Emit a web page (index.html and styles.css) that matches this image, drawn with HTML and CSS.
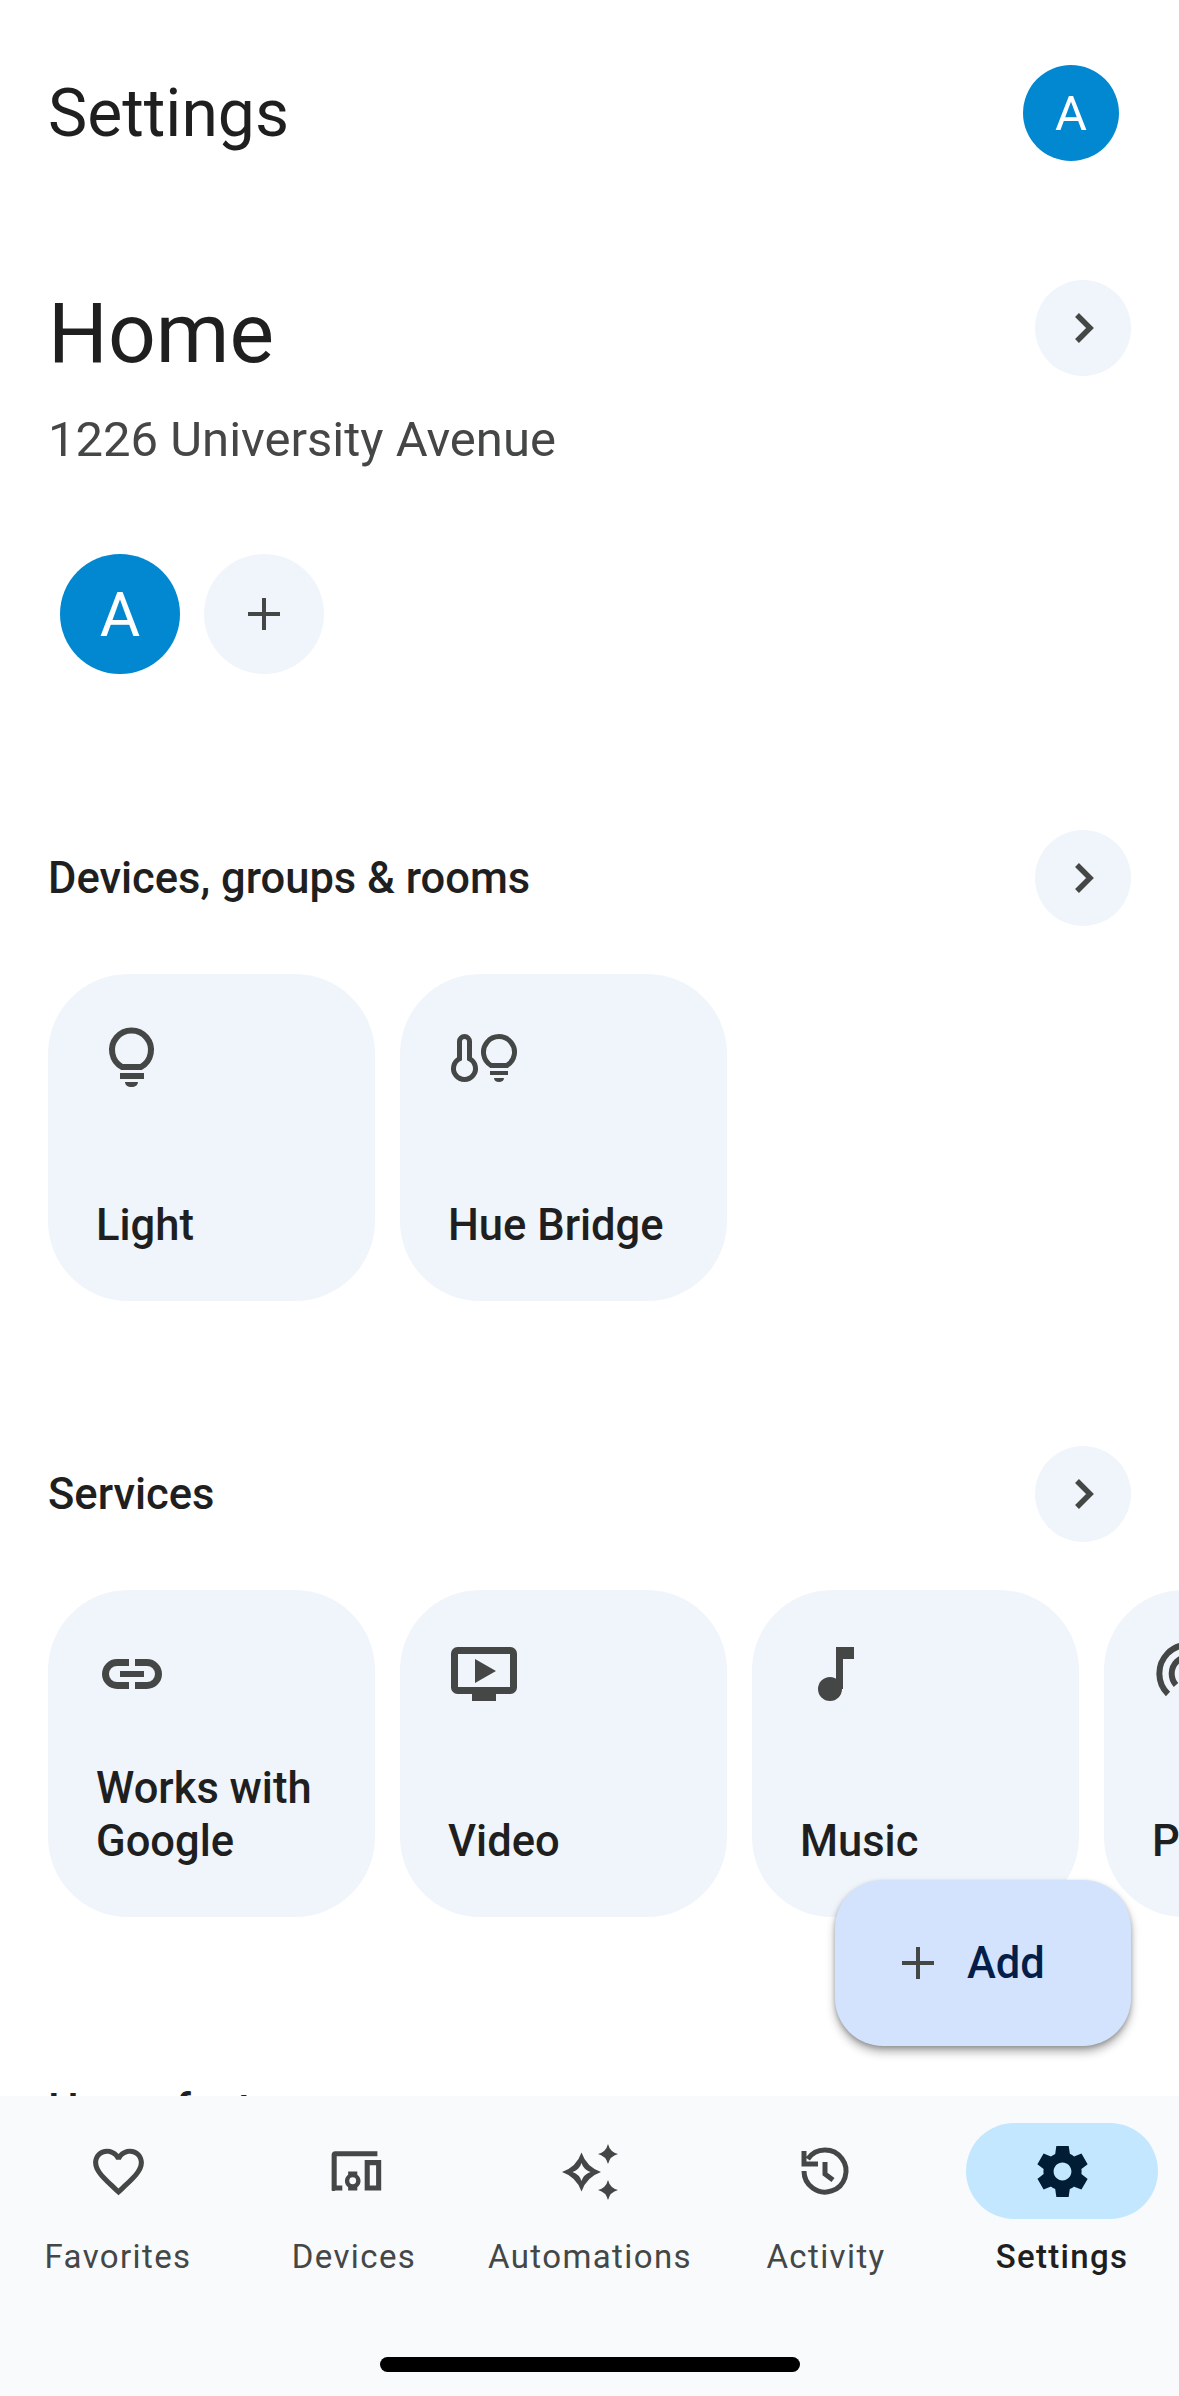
FILE: index.html
```html
<!DOCTYPE html>
<html lang="en">
<head>
<meta charset="utf-8">
<title>Settings</title>
<link rel="stylesheet" href="styles.css">
</head>
<body>
<div class="screen">
  <main class="content">
    <header class="topbar">
      <h1 class="title">Settings</h1>
      <div class="avatar avatar-small">A</div>
    </header>

    <section class="home">
      <div class="home-row">
        <div class="home-text">
          <h2 class="home-name">Home</h2>
          <p class="home-address">1226 University Avenue</p>
        </div>
        <button class="round-btn"><svg class="chev" viewBox="0 0 24 36"><path d="M5 5l13 13L5 31"/></svg></button>
      </div>
      <div class="members">
        <div class="avatar avatar-large">A</div>
        <div class="add-member"><svg class="plus" viewBox="0 0 32 32"><path d="M16 0v32M0 16h32"/></svg></div>
      </div>
    </section>

    <section class="section section-devices">
      <div class="section-head">
        <h3 class="section-title">Devices, groups &amp; rooms</h3>
        <button class="round-btn"><svg class="chev" viewBox="0 0 24 36"><path d="M5 5l13 13L5 31"/></svg></button>
      </div>
      <div class="cards">
        <div class="card">
          <svg class="card-icon" viewBox="0 0 327 160"><path class="line" d="M74 93A19.500 19.500 0 1 1 93 93Z"/><path class="solid" d="M72 99h24v6H72zM77 108h13c0 3-2.800 5-6.500 5s-6.500-2-6.500-5z"/></svg>
          <span class="card-label">Light</span>
        </div>
        <div class="card">
          <svg class="card-icon" viewBox="0 0 327 160"><g class="line thin"><path d="M59.500 67.500V84.700A11 11 0 1 0 69.500 84.700V67.500A5 5 0 0 0 59.500 67.500Z"/><path d="M91 91.400A15.500 15.500 0 1 1 107 91.400Z"/></g><path class="solid" d="M90 97h18v4H90zM94 104h10c0 2.500-2.200 4-5 4s-5-1.500-5-4z"/></svg>
          <span class="card-label">Hue Bridge</span>
        </div>
      </div>
    </section>

    <section class="section section-services">
      <div class="section-head">
        <h3 class="section-title">Services</h3>
        <button class="round-btn"><svg class="chev" viewBox="0 0 24 36"><path d="M5 5l13 13L5 31"/></svg></button>
      </div>
      <div class="cards">
        <div class="card">
          <svg class="card-icon" viewBox="0 0 327 160"><path class="line link" d="M81 72.500H69a11.500 11.500 0 0 0 0 23H81M87 72.500H99a11.500 11.500 0 0 1 0 23H87"/><path class="solid" d="M72 81h24v6H72z"/></svg>
          <span class="card-label">Works with<br>Google</span>
        </div>
        <div class="card">
          <svg class="card-icon" viewBox="0 0 327 160"><rect class="line link" x="54.500" y="60.500" width="59" height="40" rx="3"/><path class="solid" d="M75 69v24l21-12zM72 104h24v7H72z"/></svg>
          <span class="card-label">Video</span>
        </div>
        <div class="card">
          <svg class="card-icon" viewBox="0 0 327 160"><path class="solid" d="M84 57H102V69H91V99H84z"/><circle class="solid" cx="78" cy="99" r="12"/></svg>
          <span class="card-label">Music</span>
        </div>
        <div class="card">
          <svg class="card-icon" viewBox="0 0 327 160"><g class="line"><path d="M64 104A28 28 0 0 1 104 63"/><path d="M72 95A17 17 0 0 1 96 71"/></g></svg>
          <span class="card-label">Podcasts</span>
        </div>
      </div>
    </section>

    <section class="section section-next">
      <div class="section-head">
        <h3 class="section-title">Home features</h3>
      </div>
    </section>

    <button class="fab">
      <svg class="fab-plus" viewBox="0 0 32 32"><path d="M16 0v32M0 16h32"/></svg>
      <span>Add</span>
    </button>
  </main>

  <nav class="nav">
    <div class="nav-items">
      <div class="nav-item">
        <div class="nav-pill"><svg class="nav-icon" viewBox="0 0 24 24"><path d="M16.500 3c-1.740 0-3.410.81-4.500 2.090C10.910 3.810 9.240 3 7.500 3 4.420 3 2 5.420 2 8.500c0 3.780 3.400 6.860 8.550 11.540L12 21.350l1.450-1.320C18.600 15.360 22 12.280 22 8.500 22 5.420 19.580 3 16.500 3zm-4.400 15.550l-.1.100-.1-.1C7.140 14.240 4 11.390 4 8.500 4 6.500 5.500 5 7.500 5c1.540 0 3.040.99 3.570 2.360h1.870C13.460 5.990 14.960 5 16.500 5c2 0 3.500 1.500 3.500 3.500 0 2.890-3.140 5.740-7.900 10.050z"/></svg></div>
        <span class="nav-label">Favorites</span>
      </div>
      <div class="nav-item">
        <div class="nav-pill"><svg class="nav-icon" viewBox="0 0 24 24"><path d="M3 19.500V5.500A1.500 1.500 0 0 1 4.500 4H21v2H5v11.500h2.200v2H4.500A1.500 1.500 0 0 1 3 19.500zM16 7.500h6.500V19.500H16zM18 9.500v8h2.500v-8zM9.500 12h3.600v1.300a3 3 0 0 1 0 4.900v1.300H9.500v-1.300a3 3 0 0 1 0-4.900zm1.800 2.300a1.350 1.350 0 1 0 0 2.700 1.350 1.350 0 0 0 0-2.700z"/></svg></div>
        <span class="nav-label">Devices</span>
      </div>
      <div class="nav-item">
        <div class="nav-pill"><svg class="nav-icon nav-auto" viewBox="0 0 60 60" fill-rule="evenodd"><path d="M21.500 11.500Q26.500 26 41 31Q26.500 36 21.500 50.500Q16.500 36 2 31Q16.500 26 21.500 11.500ZM21.500 22Q19.500 28.500 12.500 31Q19.500 33.500 21.500 40Q23.500 33.500 30.500 31Q23.500 28.500 21.500 22ZM48 3Q50 11 58 13Q50 15 48 23Q46 15 38 13Q46 11 48 3ZM48 39Q50 47 58 49Q50 51 48 59Q46 51 38 49Q46 47 48 39Z"/></svg></div>
        <span class="nav-label">Automations</span>
      </div>
      <div class="nav-item">
        <div class="nav-pill"><svg class="nav-icon nav-history" viewBox="0 0 60 60"><path d="M11.800 18A21 21 0 1 1 8 30M8 10V23H22M29 21V33L37 39"/></svg></div>
        <span class="nav-label">Activity</span>
      </div>
      <div class="nav-item nav-active">
        <div class="nav-pill"><svg class="nav-icon" viewBox="0 0 24 24"><path d="M19.440 12.990l-.01.02c.04-.33.08-.67.08-1.010 0-.34-.03-.66-.07-.99l.01.02 2.440-1.920-2.430-4.220-2.870 1.160.01.01c-.52-.4-1.090-.74-1.710-1h.01L14.440 2H9.570l-.44 3.070h.01c-.62.26-1.190.6-1.710 1l.01-.01-2.880-1.170-2.440 4.220 2.440 1.920.01-.02c-.04.33-.07.65-.07.99 0 .34.03.68.08 1.010l-.01-.02-2.100 1.650-.33.26 2.430 4.200 2.880-1.150-.02-.04c.53.41 1.100.75 1.730 1.010h-.03L9.580 22h4.850s.03-.18.06-.42l.38-2.650h-.01c.62-.26 1.200-.6 1.730-1.010l-.02.04 2.880 1.150 2.430-4.200s-.14-.12-.33-.26l-2.110-1.660zM12 15.500c-1.930 0-3.500-1.570-3.500-3.500s1.570-3.500 3.500-3.500 3.500 1.570 3.500 3.500-1.570 3.500-3.500 3.500z"/></svg></div>
        <span class="nav-label">Settings</span>
      </div>
    </div>
    <div class="home-indicator"></div>
  </nav>
</div>
</body>
</html>
```

FILE: styles.css
```css
* { box-sizing: border-box; }
html, body { margin: 0; padding: 0; }
body { background: #fff; font-family: Roboto, "Open Sans", sans-serif; color: #1f1f1f; }
h1, h2, h3, p { margin: 0; font-weight: 400; }
button { border: 0; padding: 0; font: inherit; color: inherit; }

.screen { width: 1179px; height: 2396px; display: flex; flex-direction: column; overflow: hidden; }
.content { position: relative; flex: 1; min-height: 0; overflow: hidden; background: #fff; }

.topbar { display: flex; justify-content: space-between; align-items: center; padding: 64px 60px 0 48px; }
.title { font-size: 66px; line-height: 96px; margin-top: 2px; }
.avatar { display: flex; align-items: center; justify-content: center; border-radius: 50%; background: #0288d1; color: #fff; }
.avatar-small { width: 96px; height: 96px; font-size: 49px; }
.avatar-large { width: 120px; height: 120px; font-size: 62px; }

.home { padding: 118px 48px 0 48px; }
.home-row { display: flex; justify-content: space-between; align-items: flex-start; }
.home-name { font-size: 84px; line-height: 100px; margin-top: 4px; }
.home-address { font-size: 49px; line-height: 56px; margin-top: 28px; color: #444746; }
.round-btn { width: 96px; height: 96px; border-radius: 50%; background: #f0f5fb; display: flex; align-items: center; justify-content: center; flex: none; padding-left: 2px; }
.chev { width: 24px; height: 36px; fill: none; stroke: #444746; stroke-width: 5.5; }
.members { display: flex; gap: 24px; margin-top: 86px; padding-left: 12px; }
.add-member { width: 120px; height: 120px; border-radius: 50%; background: #f0f5fb; display: flex; align-items: center; justify-content: center; }
.plus { width: 32px; height: 32px; fill: none; stroke: #444746; stroke-width: 4; }

.section { padding-left: 48px; }
.section-devices { margin-top: 156px; }
.section-services { margin-top: 145px; }
.section-next { margin-top: 145px; }
.section-head { display: flex; justify-content: space-between; align-items: center; height: 96px; padding-right: 48px; }
.section-title { font-size: 43.5px; font-weight: 500; }
.cards { display: flex; gap: 25px; margin-top: 48px; width: 1400px; }
.card { width: 327px; height: 327px; flex: none; border-radius: 80px; background: #f0f5fb; padding: 0 20px 49px 48px; display: flex; flex-direction: column; justify-content: flex-end; position: relative; }
.card-icon { position: absolute; left: 0; top: 0; width: 327px; height: 160px; }
.card-label { font-size: 43.5px; line-height: 53px; font-weight: 500; }
.line { fill: none; stroke: #444746; stroke-width: 6; }
.thin { stroke-width: 5; }
.link { stroke-width: 7; }
.solid { fill: #444746; }

.fab { position: absolute; left: 835px; top: 1880px; width: 296px; height: 166px; border-radius: 48px; background: #d3e3fd; box-shadow: 0 6px 10px rgba(0,0,0,.3), 0 2px 4px rgba(0,0,0,.2); display: flex; align-items: center; gap: 33px; padding-left: 67px; color: #041e49; font-size: 43.5px; font-weight: 500; }
.fab-plus { width: 32px; height: 32px; fill: none; stroke: #444746; stroke-width: 4; flex: none; }

.nav { height: 300px; flex: none; background: #f8fafc; position: relative; }
.nav-items { display: grid; grid-template-columns: repeat(5, 236px); padding-top: 27px; }
.nav-item { display: flex; flex-direction: column; align-items: center; color: #444746; }
.nav-pill { width: 192px; height: 96px; border-radius: 48px; display: flex; align-items: center; justify-content: center; }
.nav-active .nav-pill { background: #c2e7ff; }
.nav-icon { width: 61px; height: 61px; fill: #444746; }
.nav-auto { width: 60px; height: 60px; }
.nav-history { fill: none; stroke: #444746; stroke-width: 5; width: 60px; height: 60px; }
.nav-active .nav-icon { fill: #001d35; }
.nav-label { font-size: 33px; line-height: 44px; margin-top: 16px; letter-spacing: 1.4px; }
.nav-active .nav-label { color: #1f1f1f; font-weight: 500; letter-spacing: 1.3px; }
.home-indicator { position: absolute; left: 380px; top: 261px; width: 420px; height: 15px; border-radius: 8px; background: #000; }
```
